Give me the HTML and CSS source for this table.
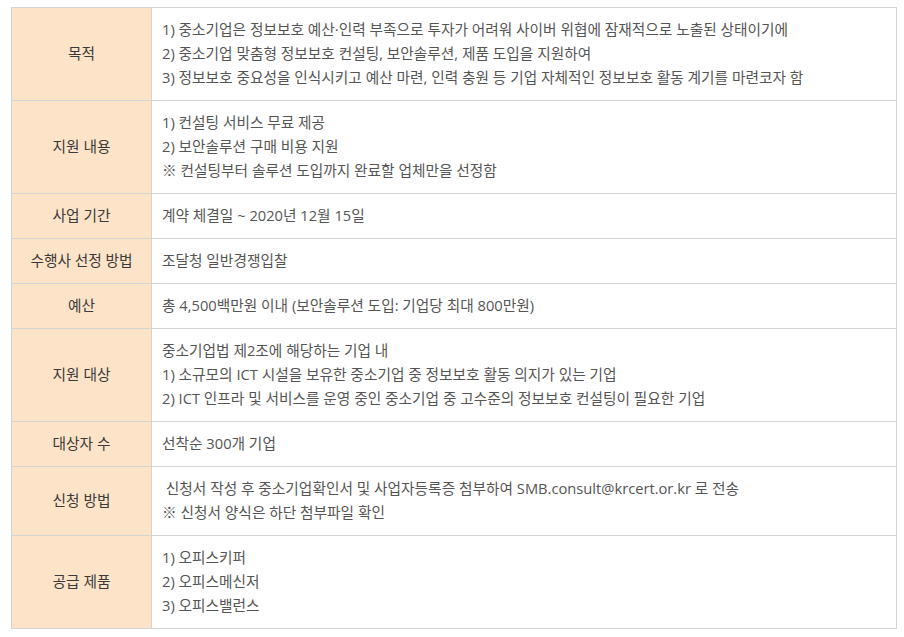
FILE: index.html
```html
<!DOCTYPE html>
<html lang="ko">
<head>
<meta charset="utf-8">
<link rel="stylesheet" href="styles.css">
</head>
<body>
<table class="info">
  <tbody>
    <tr>
      <th>목적</th>
      <td>1) 중소기업은 정보보호 예산·인력 부족으로 투자가 어려워 사이버 위협에 잠재적으로 노출된 상태이기에<br>2) 중소기업 맞춤형 정보보호 컨설팅, 보안솔루션, 제품 도입을 지원하여<br>3) 정보보호 중요성을 인식시키고 예산 마련, 인력 충원 등 기업 자체적인 정보보호 활동 계기를 마련코자 함</td>
    </tr>
    <tr>
      <th>지원 내용</th>
      <td>1) 컨설팅 서비스 무료 제공<br>2) 보안솔루션 구매 비용 지원<br>※ 컨설팅부터 솔루션 도입까지 완료할 업체만을 선정함</td>
    </tr>
    <tr>
      <th>사업 기간</th>
      <td>계약 체결일 ~ 2020년 12월 15일</td>
    </tr>
    <tr>
      <th>수행사 선정 방법</th>
      <td>조달청 일반경쟁입찰</td>
    </tr>
    <tr>
      <th>예산</th>
      <td>총 4,500백만원 이내 (보안솔루션 도입: 기업당 최대 800만원)</td>
    </tr>
    <tr>
      <th>지원 대상</th>
      <td>중소기업법 제2조에 해당하는 기업 내<br>1) 소규모의 ICT 시설을 보유한 중소기업 중 정보보호 활동 의지가 있는 기업<br>2) ICT 인프라 및 서비스를 운영 중인 중소기업 중 고수준의 정보보호 컨설팅이 필요한 기업</td>
    </tr>
    <tr>
      <th>대상자 수</th>
      <td>선착순 300개 기업</td>
    </tr>
    <tr>
      <th>신청 방법</th>
      <td>&nbsp;신청서 작성 후 중소기업확인서 및 사업자등록증 첨부하여 SMB.consult@krcert.or.kr 로 전송<br>※ 신청서 양식은 하단 첨부파일 확인</td>
    </tr>
    <tr>
      <th>공급 제품</th>
      <td>1) 오피스키퍼<br>2) 오피스메신저<br>3) 오피스밸런스</td>
    </tr>
  </tbody>
</table>
</body>
</html>
```

FILE: styles.css
```css
html, body {
  margin: 0;
  padding: 0;
  background: #ffffff;
}
body {
  padding: 7px 0 0 11px;
  font-family: "Open Sans", "Noto Sans CJK KR", sans-serif;
  font-size: 14.7px;
  line-height: 24px;
}
.info {
  border-collapse: collapse;
  width: 886px;
  table-layout: fixed;
}
.info th,
.info td {
  border: 1px solid #d3d3d3;
  padding: 9px 10px 11px;
  vertical-align: middle;
}
.info th {
  width: 119px;
  background: #fde3c8;
  color: #3a3a3a;
  font-weight: 400;
  text-align: center;
}
.info td {
  color: #555555;
  text-align: left;
  font-weight: 400;
}
```
